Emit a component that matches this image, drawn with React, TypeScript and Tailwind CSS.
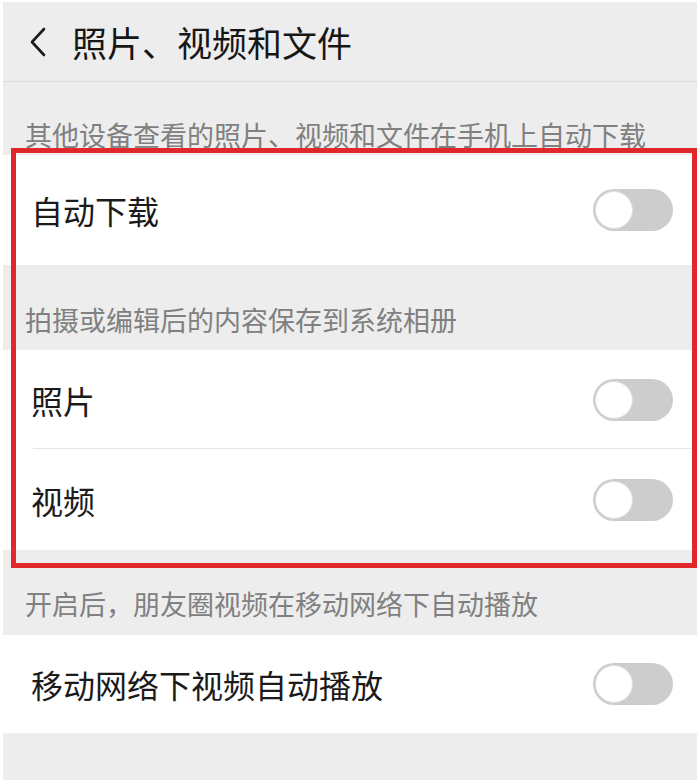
const font = { fontFamily: '"Noto Sans CJK SC", "Noto Sans", sans-serif' };

function Toggle() {
  return (
    <div className="w-[80px] h-[42px] rounded-full bg-[#cdcdcd] p-[2px] flex items-center">
      <div className="w-[38px] h-[38px] rounded-full bg-white border border-[#dedede]" />
    </div>
  );
}

function Row({ label, divider }: { label: string; divider?: boolean }) {
  return (
    <div className="bg-white relative flex-1 flex items-center justify-between pl-[28px] pr-[24px]">
      <span className="text-[32px] leading-none text-[#1b1b1b]">{label}</span>
      <Toggle />
      {divider && <div className="absolute left-[30px] right-0 bottom-0 h-px bg-[#e6e6e6]" />}
    </div>
  );
}

function Hint({ text, className }: { text: string; className: string }) {
  return (
    <div className={'flex items-end pl-[22px] ' + className}>
      <span className="text-[27px] leading-[28px] text-[#808080]">{text}</span>
    </div>
  );
}

export default function App() {
  return (
    <div className="w-[700px] h-[784px] bg-white pt-[2px] px-[3px] pb-[4px] relative" style={font}>
      <div className="bg-[#ededed] h-full flex flex-col">
        <div className="h-[80px] flex items-center border-b border-[#dcdcdc] shrink-0">
          <svg className="ml-[25px]" width="20" height="30" viewBox="0 0 20 30" fill="none">
            <path d="M16 2 L4 15 L16 28" stroke="#1b1b1b" strokeWidth="2.6" strokeLinecap="round" strokeLinejoin="round" />
          </svg>
          <span className="ml-[24px] text-[35px] leading-none text-[#161616]">照片、视频和文件</span>
        </div>
        <Hint text="其他设备查看的照片、视频和文件在手机上自动下载" className="h-[73px] pb-[6px] shrink-0" />
        <div className="h-[110px] shrink-0 flex flex-col"><Row label="自动下载" /></div>
        <Hint text="拍摄或编辑后的内容保存到系统相册" className="h-[85px] pb-[16px] shrink-0" />
        <div className="h-[99px] shrink-0 flex flex-col"><Row label="照片" divider /></div>
        <div className="h-[101px] shrink-0 flex flex-col"><Row label="视频" /></div>
        <Hint text="开启后，朋友圈视频在移动网络下自动播放" className="h-[85px] pb-[17px] shrink-0" />
        <div className="h-[98px] shrink-0 flex flex-col"><Row label="移动网络下视频自动播放" /></div>
        <div className="flex-1 border-t border-[#f2f2f2]" />
      </div>
      <div className="absolute left-[11px] top-[148px] w-[686px] h-[420px] border-[5px] border-[#e0282c] pointer-events-none" />
    </div>
  );
}
